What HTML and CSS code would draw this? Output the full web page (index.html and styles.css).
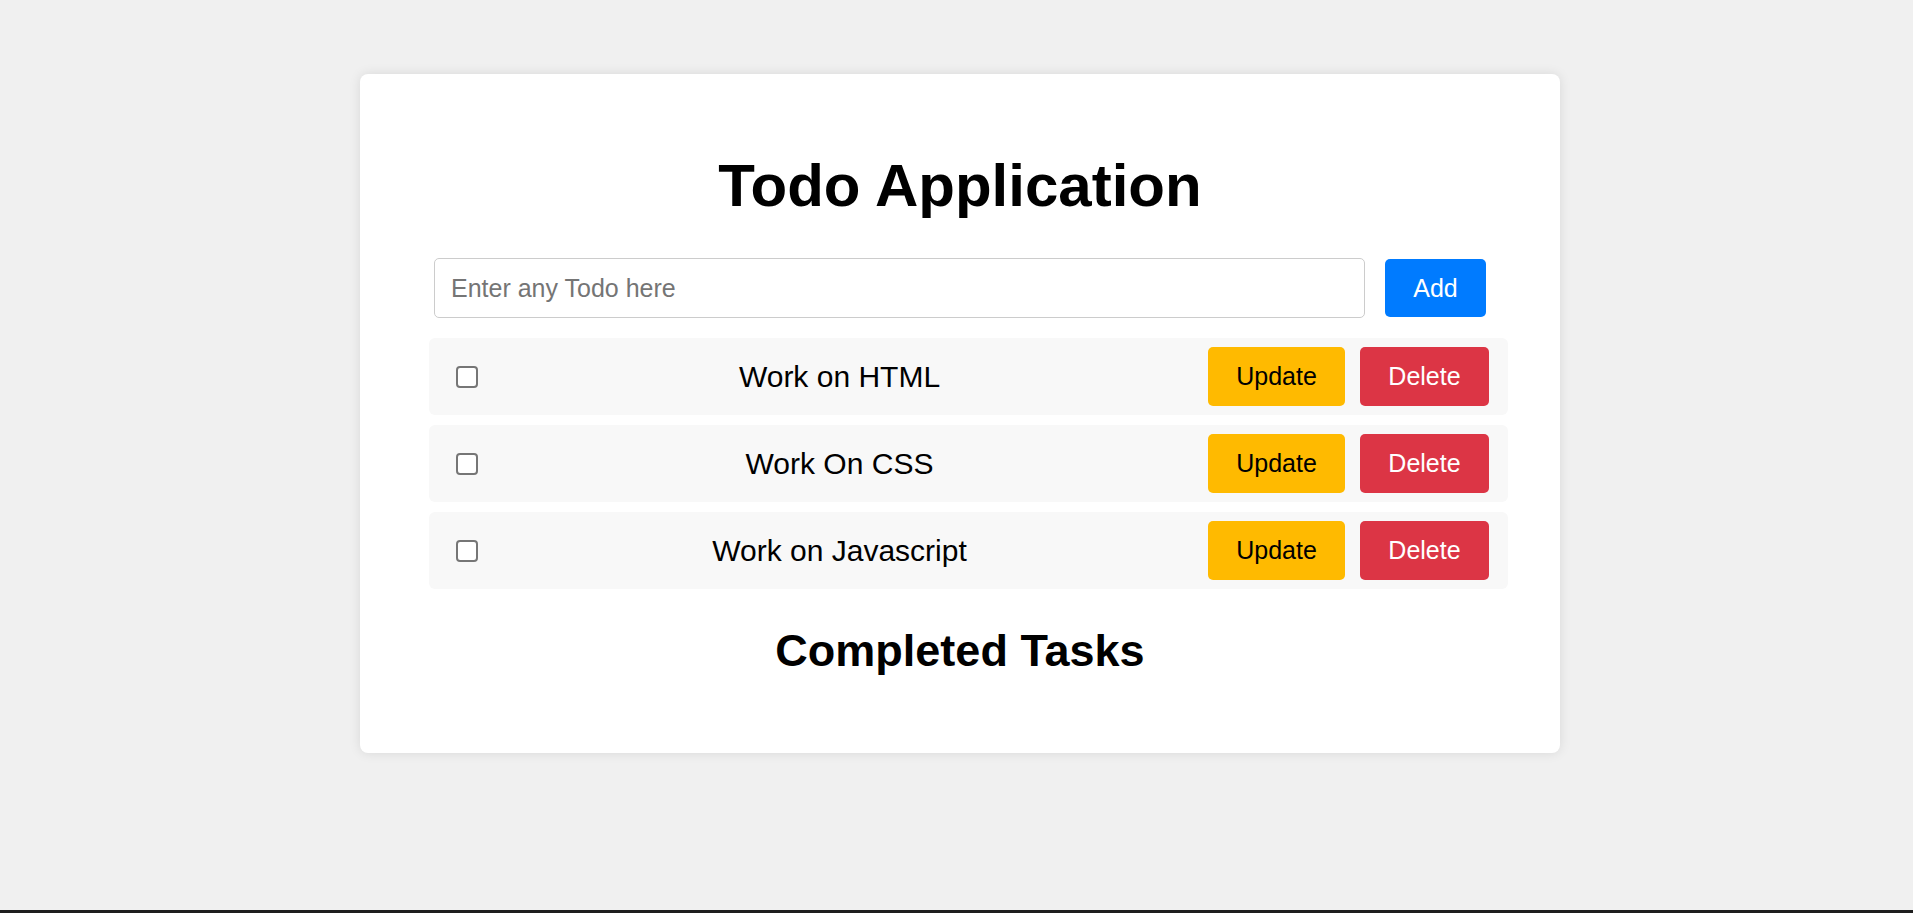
FILE: index.html
```html
<!DOCTYPE html>
<html lang="en">
<head>
<meta charset="utf-8">
<title>Todo Application</title>
<link rel="stylesheet" href="styles.css">
</head>
<body>
<div class="page">
  <main class="card">
    <h1 class="title">Todo Application</h1>
    <form class="add-row" onsubmit="return false;">
      <input class="todo-input" type="text" placeholder="Enter any Todo here">
      <button class="btn btn-add" type="button">Add</button>
    </form>
    <ul class="todo-list">
      <li class="todo-item">
        <input class="todo-check" type="checkbox">
        <span class="todo-text">Work on HTML</span>
        <div class="todo-actions">
          <button class="btn btn-update" type="button">Update</button>
          <button class="btn btn-delete" type="button">Delete</button>
        </div>
      </li>
      <li class="todo-item">
        <input class="todo-check" type="checkbox">
        <span class="todo-text">Work On CSS</span>
        <div class="todo-actions">
          <button class="btn btn-update" type="button">Update</button>
          <button class="btn btn-delete" type="button">Delete</button>
        </div>
      </li>
      <li class="todo-item">
        <input class="todo-check" type="checkbox">
        <span class="todo-text">Work on Javascript</span>
        <div class="todo-actions">
          <button class="btn btn-update" type="button">Update</button>
          <button class="btn btn-delete" type="button">Delete</button>
        </div>
      </li>
    </ul>
    <h2 class="subtitle">Completed Tasks</h2>
  </main>
</div>
<div class="bottom-bar"></div>
</body>
</html>
```
FILE: styles.css
```css
* {
  box-sizing: border-box;
}

html, body {
  margin: 0;
  padding: 0;
}

body {
  background: #f0f0f0;
  font-family: "Liberation Sans", Arial, sans-serif;
  color: #000;
  overflow: hidden;
}

.page {
  height: 910px;
  padding-top: 74px;
  padding-left: 360px;
}

.card {
  width: 1200px;
  background: #fff;
  border-radius: 8px;
  box-shadow: 0 0 12px rgba(0, 0, 0, 0.1);
  padding: 78px 0 77px;
}

.title {
  margin: 0 0 38px;
  font-size: 60px;
  line-height: 68px;
  font-weight: 700;
  text-align: center;
}

.add-row {
  display: flex;
  align-items: center;
  gap: 20px;
  margin: 0 0 20px 74px;
  height: 60px;
}

.todo-input {
  width: 931px;
  height: 60px;
  border: 1px solid #cccccc;
  border-radius: 5px;
  padding: 0 16px;
  font-family: "Liberation Sans", Arial, sans-serif;
  font-size: 25px;
  color: #000;
  background: #fff;
  outline: none;
}

.todo-input::placeholder {
  color: #757575;
}

.btn {
  border: none;
  border-radius: 5px;
  font-family: "Liberation Sans", Arial, sans-serif;
  font-size: 25px;
  padding: 0;
  cursor: pointer;
}

.btn-add {
  width: 101px;
  height: 58px;
  background: #007bff;
  color: #fff;
}

.todo-list {
  list-style: none;
  margin: 0 0 37px 69px;
  padding: 0;
  width: 1079px;
  display: flex;
  flex-direction: column;
  gap: 10px;
}

.todo-item {
  display: flex;
  align-items: center;
  height: 77px;
  padding: 0 19px 0 27px;
  background: #f8f8f8;
  border-radius: 6px;
}

.todo-check {
  appearance: none;
  -webkit-appearance: none;
  width: 22px;
  height: 22px;
  margin: 0;
  border: 2px solid #767676;
  border-radius: 4px;
  background: #fff;
  flex: none;
}

.todo-text {
  flex: 1;
  text-align: center;
  font-size: 30px;
  margin-right: 7px;
}

.todo-actions {
  display: flex;
  gap: 15px;
}

.btn-update {
  width: 137px;
  height: 59px;
  background: #ffba00;
  color: #000;
}

.btn-delete {
  width: 129px;
  height: 59px;
  background: #dc3545;
  color: #fff;
}

.subtitle {
  margin: 0;
  font-size: 45px;
  line-height: 50px;
  font-weight: 700;
  text-align: center;
}

.bottom-bar {
  height: 3px;
  background: #1e1e1e;
}
```
